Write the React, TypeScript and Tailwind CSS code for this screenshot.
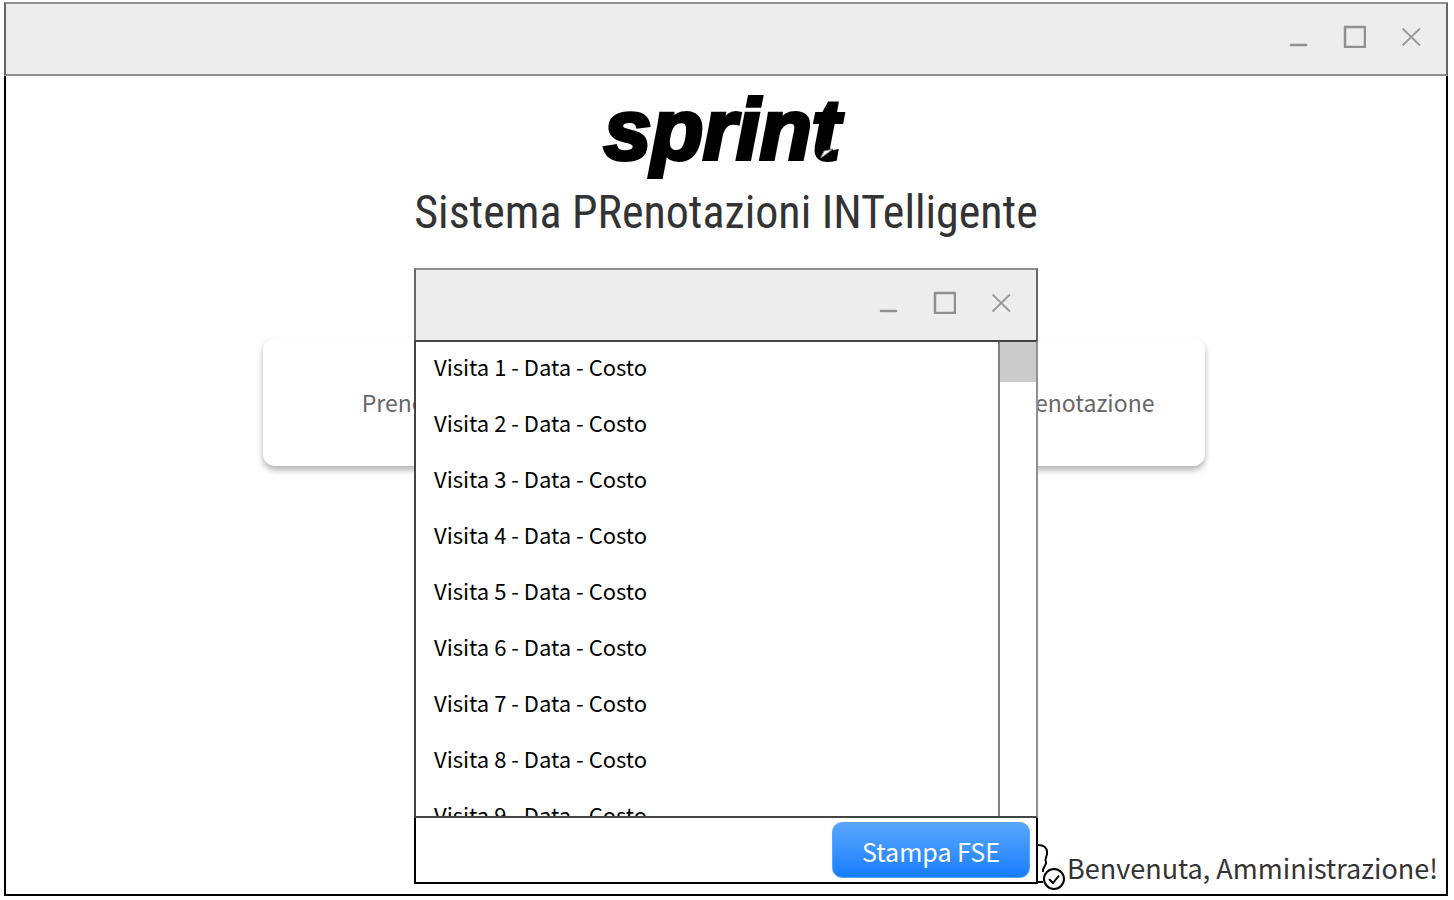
import React from "react";

const visits = [1, 2, 3, 4, 5, 6, 7, 8, 9];

function WindowBar() {
  return (
    <header className="flex h-[74px] shrink-0 items-start justify-end border-2 border-x-[#666666] border-y-[#909090] bg-[#ededed] pr-6 pt-5">
      <div className="flex gap-8">
        <button type="button" aria-label="Riduci a icona" className="size-6">
          <svg viewBox="0 0 24 24" fill="none" stroke="#909090" strokeWidth="2.5" strokeLinecap="round">
            <path d="M5 21H20" />
          </svg>
        </button>
        <button type="button" aria-label="Ingrandisci" className="size-6">
          <svg viewBox="0 0 24 24" fill="none" stroke="#909090" strokeWidth="2.5" strokeLinejoin="round">
            <path d="M3 3H23V23H3Z" />
          </svg>
        </button>
        <button type="button" aria-label="Chiudi" className="size-6">
          <svg viewBox="0 0 24 24" fill="none" stroke="#999999" strokeWidth="1.8">
            <path d="M4.5 4.5L22 21.5M22 4.5L4.5 21.5" />
          </svg>
        </button>
      </div>
    </header>
  );
}

function Logo() {
  return (
    <div className="relative mr-2 font-['Liberation_Sans',sans-serif] text-[85px] font-bold italic leading-[76px] text-black [-webkit-text-stroke:4px_black]">
      sprint
      <svg className="absolute bottom-2 right-1 h-3 w-5" viewBox="0 0 20 12" fill="none" aria-hidden="true">
        <path d="M5 9L8 3L17 1L5 10Z" fill="white" stroke="#777777" />
      </svg>
    </div>
  );
}

function CardButton({ children }: { children: React.ReactNode }) {
  return (
    <button
      type="button"
      className="h-32 w-[340px] rounded-xl bg-white text-[23px] text-[#666666] shadow-[0_4px_6px_rgba(0,0,0,0.3)]"
    >
      {children}
    </button>
  );
}

function VisitsDialog() {
  return (
    <section
      role="dialog"
      aria-label="Visite"
      className="absolute inset-x-0 top-48 mx-auto flex w-[624px] flex-col bg-white"
    >
      <WindowBar />
      <div className="-mt-0.5 flex h-[478px] border-2 border-[#444444] border-r-[#909090]">
        <ul className="min-w-0 flex-1 overflow-hidden text-[22px] leading-[48px] text-black">
          {visits.map((n) => (
            <li key={n} className="h-14 px-[18px]">
              Visita {n} - Data - Costo
            </li>
          ))}
        </ul>
        <div className="w-[38px] border-l-2 border-[#808080]">
          <div className="h-10 bg-[#cbcbcb]" />
        </div>
      </div>
      <footer className="flex h-[66px] justify-end border-2 border-t-0 border-black px-1.5 pt-1">
        <button
          type="button"
          className="h-14 w-[198px] rounded-[10px] border border-[#5aa5fb] bg-linear-to-b from-[#57a6fc] to-[#147dfe] pt-1 text-[25px] text-white"
        >
          Stampa FSE
        </button>
      </footer>
    </section>
  );
}

function Welcome() {
  return (
    <div className="absolute bottom-0 right-2 flex items-end">
      <svg className="h-[50px] w-8" viewBox="0 0 32 50" fill="none" stroke="black" strokeWidth="2" aria-hidden="true">
        <path d="M5 1C11 1 14 4 14 8C15 12 11 14 13 18C14 21 9 23 10 28" />
        <path d="M5 38H10" />
        <circle cx="21" cy="35" r="10" />
        <path d="M16 35L20 39L26 31.5" />
      </svg>
      <p className="ml-0.5 pb-1.5 text-[27px] leading-10 text-[#333333]">Benvenuta, Amministrazione!</p>
    </div>
  );
}

export default function App() {
  return (
    <div className="flex min-h-screen flex-col bg-white pb-1 pl-1 pr-1.5 pt-0.5 font-['Noto_Sans_CJK_SC',sans-serif]">
      <WindowBar />
      <main className="relative flex flex-1 flex-col items-center border-2 border-t-0 border-black">
        <div className="flex flex-col items-center pt-4">
          <Logo />
          <h1 className="mt-3.5 whitespace-nowrap font-['Roboto_Condensed','Noto_Sans_CJK_SC',sans-serif] text-[46px] font-normal leading-[60px] text-[#333333]">
            Sistema PRenotazioni INTelligente
          </h1>
        </div>
        <div className="ml-4 mt-24 flex w-full max-w-[942px] justify-between">
          <CardButton>Prenotazione</CardButton>
          <CardButton>Modifica prenotazione</CardButton>
        </div>
        <VisitsDialog />
        <Welcome />
      </main>
    </div>
  );
}
